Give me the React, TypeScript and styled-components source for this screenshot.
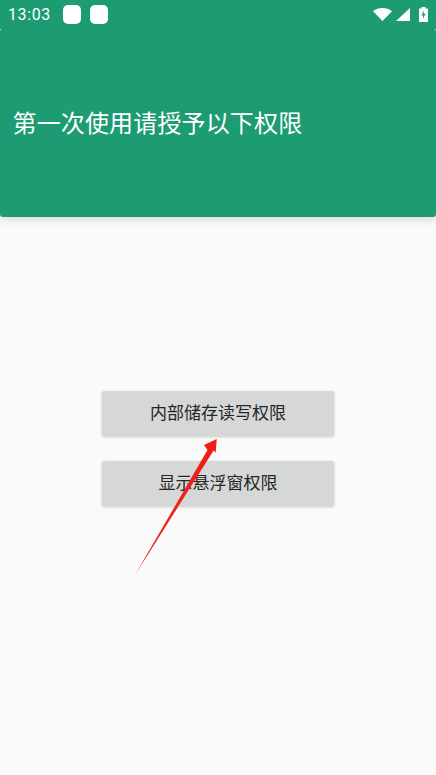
import React from "react";
import styled, { createGlobalStyle } from "styled-components";

const Global = createGlobalStyle`
  html, body { margin: 0; padding: 0; background: #fafafa; }
  * { box-sizing: border-box; }
`;

const Page = styled.div`
  position: relative;
  width: 436px;
  height: 775px;
  overflow: hidden;
  background: #fafafa;
  display: flex;
  flex-direction: column;
  font-family: "Noto Sans CJK SC", Roboto, sans-serif;
`;

const StatusBar = styled.div`
  height: 29px;
  flex: none;
  background: #1d9b72;
  display: flex;
  align-items: center;
  padding: 0 8px;
  color: #fff;
`;

const Time = styled.span`
  font-family: Roboto, sans-serif;
  font-size: 16px;
  line-height: 29px;
  letter-spacing: 0.6px;
  width: 55px;
`;

const Notifications = styled.div`
  display: flex;
  gap: 9px;
  flex: 1;
`;

const NotificationIcon = styled.span`
  width: 18px;
  height: 19px;
  border-radius: 5px;
  background: #fff;
`;

const SystemIcons = styled.div`
  display: flex;
  align-items: center;
  gap: 4px;
`;

const BatteryIcon = styled.svg`
  margin-left: 5px;
`;

const Header = styled.header`
  height: 188px;
  flex: none;
  background: #1d9b72;
  border-radius: 2px 2px 3px 3px;
  box-shadow: 0 3px 10px rgba(0, 0, 0, 0.13);
  display: flex;
  align-items: center;
  padding: 0 0 2px 12.5px;
  margin-bottom: 174px;
`;

const Title = styled.h1`
  margin: 0;
  font-size: 24px;
  font-weight: 400;
  letter-spacing: 0.15px;
  color: #fff;
  line-height: 36px;
`;

const Actions = styled.div`
  display: flex;
  flex-direction: column;
  align-items: center;
  gap: 25.5px;
`;

const PermissionButton = styled.button`
  width: 232.5px;
  height: 44.5px;
  border: 0;
  border-radius: 2px;
  background: #d6d7d7;
  color: #262626;
  font-family: inherit;
  font-size: 17px;
  font-weight: 400;
  padding: 0 0 3px;
  box-shadow: 0 1px 3px rgba(0, 0, 0, 0.2);
`;

const ArrowOverlay = styled.svg`
  position: absolute;
  left: 0;
  top: 0;
  pointer-events: none;
`;

export default function App() {
  return (
    <Page>
      <Global />
      <StatusBar>
        <Time>13:03</Time>
        <Notifications>
          <NotificationIcon />
          <NotificationIcon />
        </Notifications>
        <SystemIcons>
          <svg width="19" height="13" viewBox="0 0 19 13"><path d="M0 3.2 C5 -1 14 -1 19 3.2 L9.5 13 Z" fill="#fff" /></svg>
          <svg width="14" height="13" viewBox="0 0 14 13"><path d="M14 0 V13 H0 Z" fill="#fff" /></svg>
          <BatteryIcon width="9" height="15" viewBox="0 0 9 15">
            <path d="M0 1.5 H2.5 V0 H6.5 V1.5 H9 V15 H0 Z" fill="#fff" />
            <path d="M5.2 3 L2.4 8.4 H4.2 L3.6 12.6 L6.6 6.8 H4.7 Z" fill="#1d9b72" />
          </BatteryIcon>
        </SystemIcons>
      </StatusBar>
      <Header>
        <Title>第一次使用请授予以下权限</Title>
      </Header>
      <Actions>
        <PermissionButton>内部储存读写权限</PermissionButton>
        <PermissionButton>显示悬浮窗权限</PermissionButton>
      </Actions>
      <ArrowOverlay width="436" height="775" viewBox="0 0 436 775">
        <defs>
          <linearGradient id="arrowFade" x1="134" y1="577" x2="216" y2="440" gradientUnits="userSpaceOnUse">
            <stop offset="0" stopColor="#f7a097" />
            <stop offset="0.14" stopColor="#ee2a22" />
            <stop offset="1" stopColor="#ee1c14" />
          </linearGradient>
        </defs>
        <path d="M133.5 577.5 L207.5 450 L204 445 L216.7 439 L215.7 452.7 L213.6 450.5 Z" fill="url(#arrowFade)" />
      </ArrowOverlay>
    </Page>
  );
}
